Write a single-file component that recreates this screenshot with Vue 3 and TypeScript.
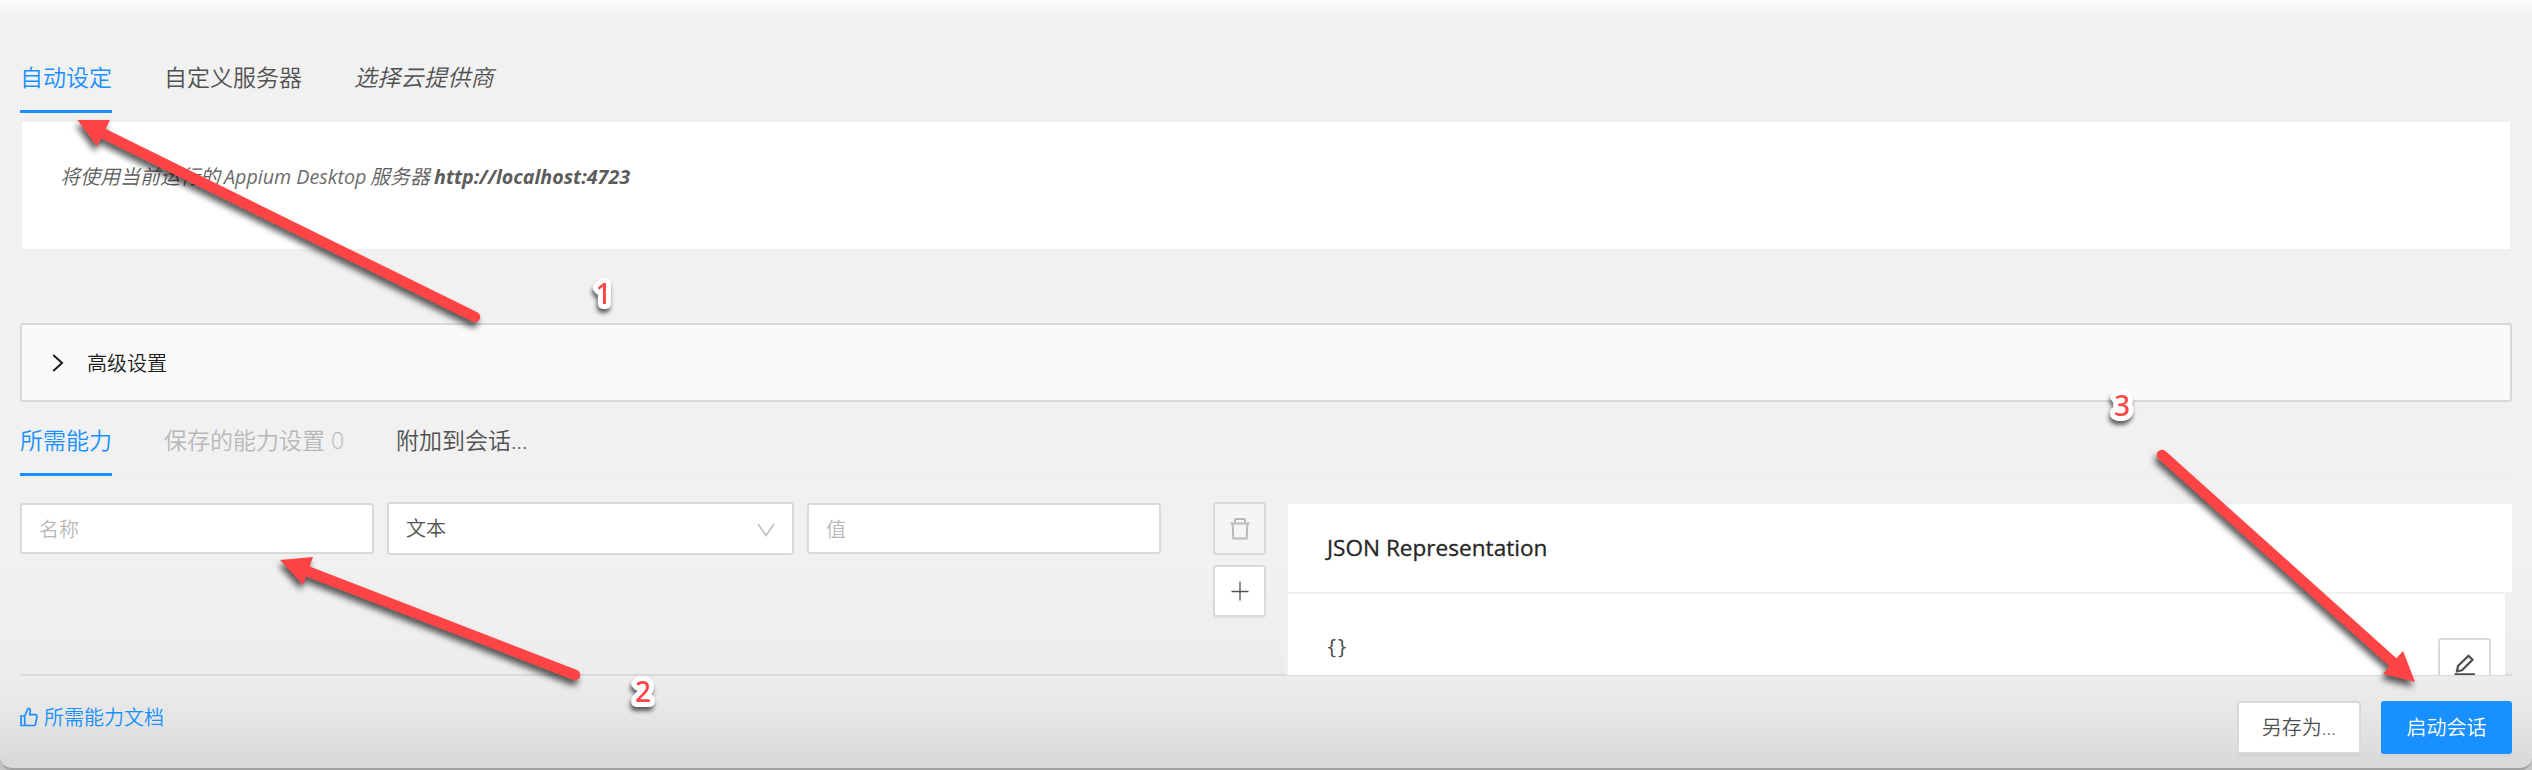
<script setup lang="ts">
interface Arrow { head: string; x1: number; y1: number; x2: number; y2: number }
interface Mark { n: string; x: number; y: number }

const serverTabs = ['自动设定', '自定义服务器', '选择云提供商']
const capTabs = ['所需能力', '保存的能力设置 0', '附加到会话...']

const arrows: Arrow[] = [
  { head: '77.5,120 110,120 97,146.5', x1: 100, y1: 132, x2: 475, y2: 317 },
  { head: '280,560 313,557 303,585', x1: 304, y1: 570, x2: 575, y2: 675 },
  { head: '2415,682 2403,651 2383,674', x1: 2397, y1: 666, x2: 2162, y2: 455 },
]
const marks: Mark[] = [
  { n: '1', x: 603.5, y: 304 },
  { n: '2', x: 643, y: 702 },
  { n: '3', x: 2122, y: 416 },
]
</script>

<template>
  <div class="window">
    <main class="content">
      <nav class="tabs tabs-server">
        <span v-for="(t, i) in serverTabs" :key="t" class="tab" :class="{ active: i === 0, italic: i === 2 }">{{ t }}</span>
      </nav>
      <section class="server-card">
        <span class="cjk">将使用当前运行的</span>
        <span class="latin">Appium Desktop</span>
        <span class="cjk">服务器</span>
        <b class="url">http://localhost:4723</b>
      </section>
      <section class="advanced">
        <svg class="chev" viewBox="0 0 12 18"><path d="M1.3 1 10 9 1.3 17" /></svg>
        <span>高级设置</span>
      </section>
      <nav class="tabs tabs-caps">
        <span v-for="(t, i) in capTabs" :key="t" class="tab" :class="{ active: i === 0, disabled: i === 1 }">{{ t }}</span>
      </nav>
      <section class="work">
        <div class="form">
          <div class="input">名称</div>
          <div class="select">
            <span>文本</span>
            <svg viewBox="0 0 18 14"><path d="M1 1 9 12.5 17 1" /></svg>
          </div>
          <div class="input">值</div>
          <div class="actions">
            <div class="btn-icon off">
              <svg width="22" height="24" viewBox="0 0 22 24"><path d="M1.5 6.5h19M6 6V3q0-1 1-1h8q1 0 1 1v3M3.5 7l.9 14.5h13.2L18.500 7" /></svg>
            </div>
            <div class="btn-icon plus">
              <svg width="20" height="20" viewBox="0 0 20 20"><path d="M10 .5v19M1.500 10.500h17" /></svg>
            </div>
          </div>
        </div>
        <div class="json">
          <header>JSON Representation</header>
          <div class="json-body">
            <code>{}</code>
            <div class="edit">
              <svg width="22" height="24" viewBox="0 0 22 24"><path d="M3 17.300l1-5.300L14.500 1.800 18.500 5.800 8 16.300zM0.500 20.500h20.500" /></svg>
            </div>
          </div>
        </div>
      </section>
    </main>
    <footer class="footer">
      <a class="doc">
        <svg width="18" height="20" viewBox="0 0 18 20"><path d="M1 9h3.700v9.500H1zM4.700 9 8 1.500q2.600-.3 2.300 2.500L9.700 7.700h5.800q1.700.3 1.400 2l-1.400 7.500q-.3 1.300-1.500 1.300H4.700" /></svg>
        <span>所需能力文档</span>
      </a>
      <div class="buttons">
        <div class="btn">另存为...</div>
        <div class="btn primary">启动会话</div>
      </div>
    </footer>
    <svg class="overlay" width="2532" height="770" viewBox="0 0 2532 770">
      <g v-for="(a, i) in arrows" :key="i" class="arrow">
        <line :x1="a.x1" :y1="a.y1" :x2="a.x2" :y2="a.y2" />
        <polygon :points="a.head" />
      </g>
      <text v-for="m in marks" :key="m.n" class="mark" :x="m.x" :y="m.y">{{ m.n }}</text>
    </svg>
  </div>
</template>

<style>
body { margin: 0; background: #c4c4c4; }
</style>

<style scoped>
* { box-sizing: border-box; }
.window {
  position: relative;
  width: 2532px;
  height: 770px;
  overflow: hidden;
  display: flex;
  flex-direction: column;
  padding: 0 20px;
  border-bottom: 2px solid #a0a0a0;
  border-radius: 0 0 12px 12px;
  background: linear-gradient(180deg, #fafafa 0, #f1f1f1 17px, #f1f1f1 560px, #ededed 675px, #e6e6e6 715px, #d8d8d8 768px);
  font: 20px/32px "Open Sans", "Noto Sans CJK SC", sans-serif;
  font-weight: 350;
  color: #505050;
}
.content { height: 676px; flex: none; display: flex; flex-direction: column; border-bottom: 2px solid #d9d9d9; }
.tabs { display: flex; gap: 52px; flex: none; border-bottom: 2px solid #efefef; font-size: 23px; line-height: 34px; }
.tabs-server { height: 113px; padding-top: 60px; }
.tabs-caps { height: 74px; padding-top: 22px; }
.tab { height: 53px; white-space: pre; }
.tabs-caps .tab { height: 52px; line-height: 33px; }
.active { color: #1890ff; border-bottom: 3px solid #1890ff; }
.italic { font-style: italic; letter-spacing: .3px; }
.disabled { color: #b8b8b8; }
.server-card {
  height: 131px; flex: none; margin-top: 7px; padding: 39px 38px;
  border: 2px solid #f0f0f0; border-radius: 3px; background: #fff;
  display: flex; font-style: italic; white-space: nowrap; color: #5c5c5c;
}
.latin { width: 146px; margin-left: 4px; font-size: 19.7px; font-weight: 400; color: #6c6c6c; }
.url { margin-left: 4px; font-size: 19.700px; }
.advanced {
  height: 79px; flex: none; margin-top: 72px; padding: 0 31px;
  border: 2px solid #d9d9d9; border-radius: 3px; background: #fafafa;
  display: flex; align-items: center; gap: 23px; color: #1c1c1c;
}
.advanced span { padding-top: 2px; margin-left: -1px; }
.chev { width: 12px; height: 18px; margin: 0 1px 0 -1px; }
svg path { fill: none; stroke: currentColor; stroke-width: 2; }
.work { display: flex; justify-content: space-between; padding-top: 26px; height: 198px; flex: none; }
.form { display: flex; gap: 13px; }
.input, .select { height: 51px; border: 2px solid #d9d9d9; border-radius: 3px; background: #fff; padding: 0 17px; line-height: 49px; }
.input { width: 354px; margin-top: 1px; color: #b8b8b8; }
.select { width: 407px; height: 53px; display: flex; justify-content: space-between; align-items: center; }
.select svg { width: 18px; height: 14px; margin-top: 2px; color: #bfbfbf; }
.select svg path { stroke-width: 1.6; }
.actions { margin-left: 39px; display: flex; flex-direction: column; gap: 10px; }
.btn-icon { width: 53px; height: 53px; border: 2px solid #d9d9d9; border-radius: 3px; background: #fff; display: flex; align-items: center; justify-content: center; }
.off { background: #f5f5f5; color: #b8b8b8; }
.plus { height: 52px; box-shadow: 0 2px 0 rgba(0, 0, 0, .025); }
.plus path { stroke-width: 1.3; }
.json { width: 1226px; position: relative; border-left: 2px solid #f0f0f0; border-top: 2px solid #f0f0f0; height: 173px; }
.json header { height: 90px; padding: 27px 39px; border-bottom: 2px solid #f0f0f0; background: #fff; color: #262626; font: 500 22.6px/34px "Open Sans", sans-serif; -webkit-text-stroke: .3px #262626; }
.json-body { display: flex; justify-content: space-between; margin-right: 7px; height: 81px; background: #fff; overflow: hidden; padding: 43px 14px 0 38px; }
.json code { font: 19px/21px "DejaVu Sans Mono", monospace; letter-spacing: -1px; }
.edit { width: 53px; height: 53px; flex: none; margin-top: 1px; border: 2px solid #d9d9d9; border-radius: 3px; padding: 14px 0 0 14px; }
.edit svg { display: block; }
.edit path { stroke-width: 2.3; }
.footer { display: flex; justify-content: space-between; height: 92px; }
.doc { display: flex; align-items: flex-start; gap: 6px; padding-top: 25px; color: #1890ff; }
.doc span { line-height: 33px; }
.doc svg { margin-top: 6px; }
.doc path { stroke-width: 1.7; }
.buttons { display: flex; gap: 20px; padding-top: 25px; }
.btn { width: 124px; height: 53px; border: 2px solid #d9d9d9; border-radius: 3px; background: #fff; text-align: center; line-height: 50px; box-shadow: 0 3px 0 rgba(0, 0, 0, .03); }
.primary { width: 131px; border-color: #1890ff; background: #1890ff; color: #fff; }
.overlay { position: absolute; left: 0; top: 0; }
.arrow { filter: drop-shadow(-2px 5px 3px rgba(0, 0, 0, .65)); }
.arrow line { stroke: #fe4444; stroke-width: 10.5; stroke-linecap: round; }
.arrow polygon { fill: #fe4444; }
.mark {
  font: 500 28px "Noto Sans", sans-serif; text-anchor: middle; fill: #fe4444;
  stroke: #fff; stroke-width: 10px; stroke-linejoin: round; paint-order: stroke;
  filter: drop-shadow(-1px 4px 2px rgba(0, 0, 0, .6));
}
</style>
